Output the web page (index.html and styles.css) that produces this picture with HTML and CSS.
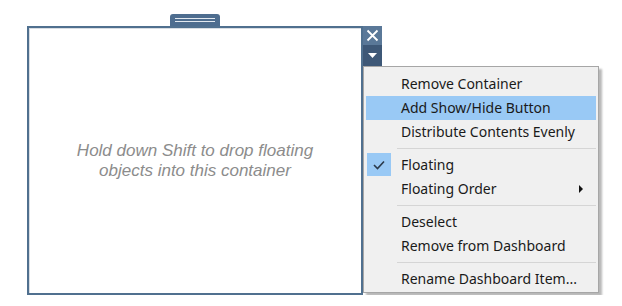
FILE: index.html
```html
<!DOCTYPE html>
<html lang="en">
<head>
  <meta charset="UTF-8">
  <title>Floating container</title>
  <link rel="stylesheet" href="styles.css">
</head>
<body>
  <div class="stage">
    <div class="grip-row">
      <div class="grip"><span></span><span></span></div>
    </div>
    <div class="work">
      <div class="container">
        <p class="hint">Hold down Shift to drop floating<br>objects into this container</p>
      </div>
      <div class="side">
        <button class="btn-close" title="Remove">
          <svg width="13" height="13" viewBox="0 0 13 13"><path d="M1.5 1.5 L11.5 11.5 M11.5 1.5 L1.5 11.5" stroke="#fff" stroke-width="1.8" fill="none"/></svg>
        </button>
        <button class="btn-more" title="More options">
          <svg width="9" height="5" viewBox="0 0 9 5"><path d="M0 0 H9 L4.5 5 Z" fill="#fff"/></svg>
        </button>
        <ul class="menu">
          <li class="item">Remove Container</li>
          <li class="item active">Add Show/Hide Button</li>
          <li class="item">Distribute Contents Evenly</li>
          <li class="sep"></li>
          <li class="item checked">
            <span class="check">
              <svg width="12" height="10" viewBox="0 0 12 10"><path d="M1 5 L4.5 8.5 L11 1.5" stroke="#2b3a4a" stroke-width="1.6" fill="none"/></svg>
            </span>
            Floating
          </li>
          <li class="item sub">Floating Order</li>
          <li class="sep"></li>
          <li class="item">Deselect</li>
          <li class="item">Remove from Dashboard</li>
          <li class="sep"></li>
          <li class="item">Rename Dashboard Item...</li>
        </ul>
      </div>
    </div>
  </div>
</body>
</html>
```

FILE: styles.css
```css
/* General */
body {
  margin: 0;
  padding: 14px 0 0 27px;
  background: #fff;
  font-family: "Liberation Sans", Arial, sans-serif;
}
.grip-row {
  height: 12px;
  padding-left: 143px;
}
.grip {
  width: 50px;
  height: 12px;
  background: #4e6d8f;
  border-radius: 3px 3px 0 0;
  display: flex;
  flex-direction: column;
  align-items: center;
  padding-top: 4px;
  box-sizing: border-box;
  gap: 2px;
}
.grip span {
  display: block;
  width: 40px;
  height: 1px;
  background: #e3e9f0;
}
.work {
  display: flex;
  align-items: flex-start;
}
/* Container box */
.container {
  width: 332px;
  height: 265px;
  border: 2px solid #50708f;
  box-shadow: inset 1px 1px 0 #d8dde3;
  display: flex;
  align-items: center;
  justify-content: center;
}
.hint {
  margin: 0;
  text-align: center;
  font-style: italic;
  font-size: 17px;
  line-height: 20px;
  color: #8c8c8c;
}
/* Side buttons and menu */
.side {
  display: flex;
  flex-direction: column;
  align-items: flex-start;
}
.side button {
  width: 19px;
  border: none;
  padding: 0;
  display: flex;
  align-items: center;
  justify-content: center;
}
.btn-close {
  height: 19px;
  background: #5a7898;
}
.btn-more {
  height: 21px;
  background: #3e5877;
}
.menu {
  list-style: none;
  margin: 0;
  padding: 5px 2px 1px;
  width: 230px;
  background: #f0f0f0;
  border: 1px solid #a6a6a6;
  box-shadow: 3px 3px 2px rgba(0,0,0,0.28);
  font-family: "Noto Sans", "Liberation Sans", sans-serif;
  font-size: 14px;
  color: #1a1a1a;
}
.item {
  position: relative;
  height: 24px;
  line-height: 24px;
  padding-left: 35px;
}
.item.active {
  background: #99c9f5;
}
.check {
  position: absolute;
  left: 1px;
  top: 0;
  width: 24px;
  height: 23px;
  background: #99c9f5;
  display: flex;
  align-items: center;
  justify-content: center;
}
.sub::after {
  content: "";
  position: absolute;
  right: 13px;
  top: 8px;
  border-left: 4px solid #111;
  border-top: 4px solid transparent;
  border-bottom: 4px solid transparent;
}
.sep {
  height: 1px;
  background: #d5d5d5;
  margin: 4px 0 4px 31px;
}
```
